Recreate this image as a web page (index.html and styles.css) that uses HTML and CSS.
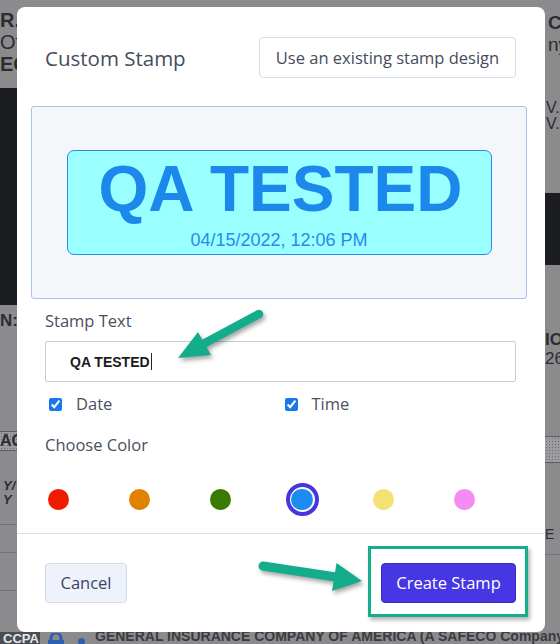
FILE: index.html
```html
<!DOCTYPE html>
<html lang="en">
<head>
<meta charset="utf-8">
<title>Custom Stamp</title>
<link rel="stylesheet" href="styles.css">
</head>
<body>
<div class="page">
  <div class="backdrop">
    <div class="strip strip-left">
      <div class="doc-head">
        <div class="b">R.</div>
        <div>Of</div>
        <div class="b">EO</div>
      </div>
      <div class="dark dark-left"></div>
      <div class="doc-lower">
        <div class="b n-label">N:</div>
        <div class="pattern pattern-left">AG</div>
        <div class="small-y">Y/<br>Y</div>
        <div class="rule rule-1"></div>
        <div class="rule rule-2"></div>
        <div class="rule rule-3"></div>
      </div>
    </div>
    <div class="center-fill"></div>
    <div class="strip strip-right">
      <div class="doc-head-r">
        <div class="b">Co</div>
        <div>ny.</div>
      </div>
      <div class="vlines">V.<br>V.</div>
      <div class="dark dark-right"></div>
      <div class="doc-lower-r">
        <div class="b">IO</div>
        <div>26</div>
        <div class="pattern pattern-right"></div>
        <div class="e-mark">E</div>
        <div class="rule rule-r"></div>
      </div>
    </div>
    <div class="bottom-bar">
      <span class="ccpa">CCPA</span>
      <svg class="lock" width="20" height="14" viewBox="0 0 20 14"><path d="M5 8 V5 a5 5 0 0 1 10 0 V8" fill="none" stroke="#2f5fb0" stroke-width="3"/><rect x="2" y="7" width="16" height="8" rx="1" fill="#2f5fb0"/></svg>
      <span class="dot-blue"></span>
      <div class="company">
        <div class="company-name">GENERAL INSURANCE COMPANY OF AMERICA (A SAFECO Company)</div>
        <div class="company-addr">Home Office: 62 Maple Ave, Keene, NH 03431 (A stock insurance company.)</div>
      </div>
    </div>
  </div>

  <div class="modal">
    <div class="modal-header">
      <h2 class="modal-title">Custom Stamp</h2>
      <button class="btn btn-outline">Use an existing stamp design</button>
    </div>

    <div class="preview">
      <div class="stamp">
        <div class="stamp-text">QA TESTED</div>
        <div class="stamp-date">04/15/2022, 12:06 PM</div>
      </div>
    </div>

    <div class="form">
      <label class="label label-stamp">Stamp Text</label>
      <div class="text-input"><span class="input-value">QA TESTED</span><span class="caret"></span></div>
      <div class="checks">
        <label class="check"><input type="checkbox" checked><span>Date</span></label>
        <label class="check"><input type="checkbox" checked><span>Time</span></label>
      </div>
      <div class="label label-color">Choose Color</div>
      <div class="colors">
        <span class="swatch"><span class="dot red"></span></span>
        <span class="swatch"><span class="dot orange"></span></span>
        <span class="swatch"><span class="dot green"></span></span>
        <span class="swatch selected"><span class="dot blue"></span></span>
        <span class="swatch"><span class="dot yellow"></span></span>
        <span class="swatch"><span class="dot pink"></span></span>
      </div>
    </div>

    <div class="modal-footer">
      <button class="btn btn-cancel">Cancel</button>
      <button class="btn btn-primary">Create Stamp</button>
    </div>
  </div>

  <div class="highlight"></div>

  <svg class="annotations" width="560" height="644" viewBox="0 0 560 644">
    <g class="arrow">
      <line x1="259" y1="314" x2="205" y2="343" stroke-width="8.5"/>
      <polygon points="178,358 198,332 211,355"/>
    </g>
    <g class="arrow">
      <line x1="263" y1="566" x2="336" y2="577" stroke-width="9"/>
      <polygon points="362,581 336.5,563 332,591"/>
    </g>
  </svg>
</div>
</body>
</html>
```

FILE: styles.css
```css
* { box-sizing: border-box; }

html, body {
  margin: 0;
  padding: 0;
  width: 560px;
  height: 644px;
  overflow: hidden;
  background: #8b8b8e;
}

.page {
  position: relative;
  width: 560px;
  height: 644px;
  overflow: hidden;
  font-family: "Open Sans", "Noto Sans", sans-serif;
}

/* ---------- dimmed page behind the dialog ---------- */
.backdrop {
  display: grid;
  grid-template-columns: 17px 1fr 15px;
  grid-template-rows: 632px 12px;
  width: 560px;
  height: 644px;
  background: #8b8b8e;
  color: #2c2d31;
  font-family: "Liberation Sans", Arial, sans-serif;
}

.strip {
  display: flex;
  flex-direction: column;
  white-space: nowrap;
  min-width: 0;
}
.strip-left { overflow: visible; }
.strip-right { overflow: hidden; }

.b { font-weight: 700; }

.doc-head {
  height: 88px;
  padding-top: 9px;
  font-size: 20px;
  line-height: 22px;
}

.dark { background: #1c1d21; }
.dark-left { height: 217px; }

.doc-lower {
  display: flex;
  flex-direction: column;
  font-size: 17px;
}
.n-label { margin-top: 6px; line-height: 20px; }

.pattern {
  background-color: #9c9c9f;
  background-image: radial-gradient(#6e6e72 0.8px, transparent 1px);
  background-size: 3px 3px;
  border-top: 1px solid #5d5d61;
  border-bottom: 1px solid #5d5d61;
}
.pattern-left {
  margin-top: 100px;
  height: 20px;
  font-weight: 700;
  font-size: 16px;
  line-height: 18px;
  width: 40px;
}
.small-y {
  margin-top: 28px;
  font-size: 13px;
  line-height: 14px;
  font-weight: 700;
  padding-left: 3px;
  font-style: italic;
}
.rule { height: 1px; background: #6c7586; width: 40px; }
.rule-1 { margin-top: 17px; }
.rule-2 { margin-top: 27px; }
.rule-3 { margin-top: 37px; }

.center-fill { background: #8b8b8e; }

.doc-head-r {
  padding-top: 12px;
  padding-left: 3px;
  font-size: 19px;
  line-height: 22px;
  height: 100px;
}
.vlines {
  font-size: 16px;
  line-height: 16px;
  height: 93px;
  padding-left: 1px;
}
.dark-right { height: 72px; }
.doc-lower-r {
  display: flex;
  flex-direction: column;
  padding-top: 65px;
  font-size: 17px;
  line-height: 19px;
}
.pattern-right { margin-top: 68px; height: 27px; }
.e-mark { margin-top: 62px; font-size: 14px; }
.rule-r { margin-top: 10px; }

.bottom-bar {
  grid-column: 1 / -1;
  display: flex;
  align-items: flex-start;
  overflow: hidden;
  white-space: nowrap;
  background: #8b8b8e;
}
.ccpa {
  display: block;
  flex: none;
  width: 40px;
  height: 12px;
  background: #4a4d54;
  color: #e6e7ea;
  font-size: 13px;
  font-weight: 700;
  line-height: 14px;
  padding-left: 3px;
}
.lock { flex: none; margin: 1px 0 0 6px; }
.dot-blue {
  display: block;
  flex: none;
  width: 7px;
  height: 7px;
  margin: 6px 0 0 12px;
  border-radius: 50%;
  background: #2f5fb0;
}
.company { margin: -3px 0 0 10px; }
.company-name {
  font-size: 14px;
  font-weight: 700;
  line-height: 14px;
  color: #3a3b40;
}
.company-addr {
  font-size: 12px;
  line-height: 14px;
  color: #3a3b40;
}

/* ---------- dialog ---------- */
.modal {
  position: absolute;
  left: 17px;
  top: 7px;
  width: 528px;
  height: 625px;
  background: #fff;
  border-radius: 8px;
  display: flex;
  flex-direction: column;
  color: #495060;
}

.modal-header {
  display: flex;
  justify-content: space-between;
  align-items: center;
  padding: 30px 29px 0 28px;
}
.modal-title {
  margin: 0;
  font-size: 20.5px;
  font-weight: 400;
  color: #454c5c;
  line-height: 28px;
}

.btn {
  font-family: inherit;
  font-size: 16.5px;
  border-radius: 4px;
  cursor: pointer;
  line-height: 22px;
  height: 41px;
  margin: 0;
}
.btn-outline {
  width: 257px;
  background: #fff;
  border: 1px solid #d6dce6;
  color: #454c5c;
  padding: 0 12px;
}

.preview {
  margin: 28px 18px 0 14px;
  height: 193px;
  background: #f5f6fa;
  border: 1px solid #a9c0f2;
  border-radius: 3px;
  display: flex;
  align-items: center;
  justify-content: center;
}

.stamp {
  width: 425px;
  height: 105px;
  background: #99ffff;
  border: 1px solid #2b8ae9;
  border-radius: 7px;
  display: flex;
  flex-direction: column;
  align-items: center;
  padding-top: 5.6px;
  font-family: "Liberation Sans", Arial, sans-serif;
  color: #1c88ec;
}
.stamp-text {
  font-size: 64px;
  font-weight: 700;
  line-height: 64px;
  margin-left: 3px;
}
.stamp-date {
  margin-top: 9px;
  font-size: 18px;
  line-height: 20px;
  color: #2a8ae9;
}

.form {
  display: flex;
  flex-direction: column;
  padding: 0 29px 0 28px;
}
.label {
  font-size: 16.5px;
  line-height: 22px;
  color: #4a5060;
}
.label-stamp { margin-top: 11px; }

.text-input {
  margin-top: 9px;
  height: 41px;
  border: 1px solid #c3ced8;
  border-radius: 2px;
  display: flex;
  align-items: center;
  padding-left: 24px;
}
.input-value {
  font-family: "Liberation Sans", Arial, sans-serif;
  font-size: 14px;
  font-weight: 700;
  color: #1b1c20;
}
.caret {
  width: 1px;
  height: 17px;
  background: #222;
  margin-left: 1px;
}

.checks {
  margin-top: 11px;
  display: grid;
  grid-template-columns: 1fr 1fr;
}
.check {
  display: flex;
  align-items: center;
  font-size: 16.5px;
  line-height: 22px;
  color: #4a5060;
}
.check input {
  width: 13px;
  height: 13px;
  margin: 0 14px 0 4px;
  accent-color: #1a76ee;
}

.label-color { margin-top: 19px; }

.colors {
  margin: 27px 35px 0 -3px;
  display: flex;
  justify-content: space-between;
}
.swatch {
  width: 33px;
  height: 33px;
  display: flex;
  align-items: center;
  justify-content: center;
  border-radius: 50%;
}
.swatch.selected {
  border: 4px solid #4636e0;
}
.dot {
  display: block;
  width: 21px;
  height: 21px;
  border-radius: 50%;
}
.swatch.selected .dot {
  width: 21.5px;
  height: 21.5px;
}
.red { background: #ef1b00; }
.orange { background: #e08200; }
.green { background: #3b7a00; }
.blue { background: #1d8cf0; }
.yellow { background: #f2e274; }
.pink { background: #f58cf6; }

.modal-footer {
  margin-top: 17px;
  border-top: 1px solid #dde1e7;
  display: flex;
  justify-content: space-between;
  padding: 29px 29px 0 28px;
}
.btn-cancel {
  width: 82px;
  height: 40px;
  background: #eef2fb;
  border: 1px solid #d3dbeb;
  color: #3b4468;
  padding: 0;
}
.btn-primary {
  width: 135px;
  height: 40px;
  background: #4736e4;
  border: 1px solid #3a2bc8;
  color: #fff;
  padding: 0;
}

/* ---------- annotations ---------- */
.highlight {
  position: absolute;
  left: 368px;
  top: 546px;
  width: 160px;
  height: 71px;
  border: 3px solid #15ad8b;
  box-shadow: 2px 3px 4px rgba(0, 0, 0, 0.3);
}

.annotations {
  position: absolute;
  left: 0;
  top: 0;
  pointer-events: none;
}
.arrow {
  fill: #13ad8b;
  stroke: #13ad8b;
  stroke-linecap: round;
  filter: drop-shadow(2px 3px 2px rgba(0, 0, 0, 0.35));
}
.arrow polygon { stroke: none; }
```
